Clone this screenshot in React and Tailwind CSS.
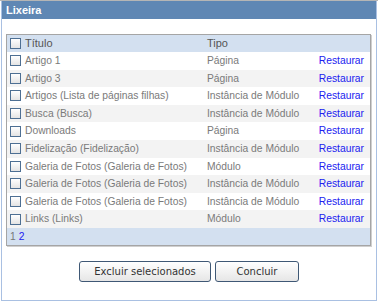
import React from 'react';

const rows = [
  { title: 'Artigo 1', type: 'Página' },
  { title: 'Artigo 3', type: 'Página' },
  { title: 'Artigos (Lista de páginas filhas)', type: 'Instância de Módulo' },
  { title: 'Busca (Busca)', type: 'Instância de Módulo' },
  { title: 'Downloads', type: 'Página' },
  { title: 'Fidelização (Fidelização)', type: 'Instância de Módulo' },
  { title: 'Galeria de Fotos (Galeria de Fotos)', type: 'Módulo' },
  { title: 'Galeria de Fotos (Galeria de Fotos)', type: 'Instância de Módulo' },
  { title: 'Galeria de Fotos (Galeria de Fotos)', type: 'Instância de Módulo' },
  { title: 'Links (Links)', type: 'Módulo' },
];

function Box() {
  return (
    <span className="inline-block w-[11px] h-[11px] shrink-0 border border-[#4d6f93] bg-gradient-to-b from-[#ffffff] to-[#e4e4e4]" />
  );
}

export default function App() {
  return (
    <div className="w-[378px] h-[302px] bg-white text-[10.3px] font-['Liberation_Sans',Arial,sans-serif]">
      <div className="h-[1px] bg-[#b5b5b5]" />
      <div className="mx-[1px] h-[300px] border-x border-b border-[#a9c0e2] flex flex-col">
        <div className="h-[18px] bg-[#5f87b4] text-white font-bold text-[11px] flex items-center px-[4px]">Lixeira</div>

        <div className="ml-[4px] mr-[5px] mt-[15px] border border-[#a5a5a5] shadow-[1px_1px_0_#cfcfcf]">
          <div className="h-[17px] bg-[#d3e0f0] flex items-center text-[#555] text-[11px]">
            <div className="w-[200px] flex items-center gap-[4px] pl-[3px]">
              <Box />
              <span>Título</span>
            </div>
            <span>Tipo</span>
          </div>
          {rows.map((r, i) => (
            <div
              key={i}
              className={`h-[17.6px] flex items-center text-[#7a7a7a] ${i % 2 === 1 ? 'bg-[#f3f3f3]' : 'bg-white'}`}
            >
              <div className="w-[200px] flex items-center gap-[4px] pl-[3px]">
                <Box />
                <span>{r.title}</span>
              </div>
              <span className="flex-1">{r.type}</span>
              <a className="text-[#2121f0] pr-[6px] cursor-pointer">Restaurar</a>
            </div>
          ))}
          <div className="h-[17px] bg-[#d3e0f0] flex items-center pl-[3px] gap-[3px]">
            <span className="text-[#777]">1</span>
            <a className="text-[#2121f0]">2</a>
          </div>
        </div>

        <div className="mt-[15px] flex justify-center gap-[4px]">
          <button className="w-[132px] h-[21px] rounded-[3px] border border-[#3f5875] bg-gradient-to-b from-[#ffffff] to-[#e6e6e6] text-[#333] font-['DejaVu_Sans',Tahoma,sans-serif] text-[10px]">
            Excluir selecionados
          </button>
          <button className="w-[84px] h-[21px] rounded-[3px] border border-[#3f5875] bg-gradient-to-b from-[#ffffff] to-[#e6e6e6] text-[#333] font-['DejaVu_Sans',Tahoma,sans-serif] text-[10px]">
            Concluir
          </button>
        </div>
      </div>
    </div>
  );
}
